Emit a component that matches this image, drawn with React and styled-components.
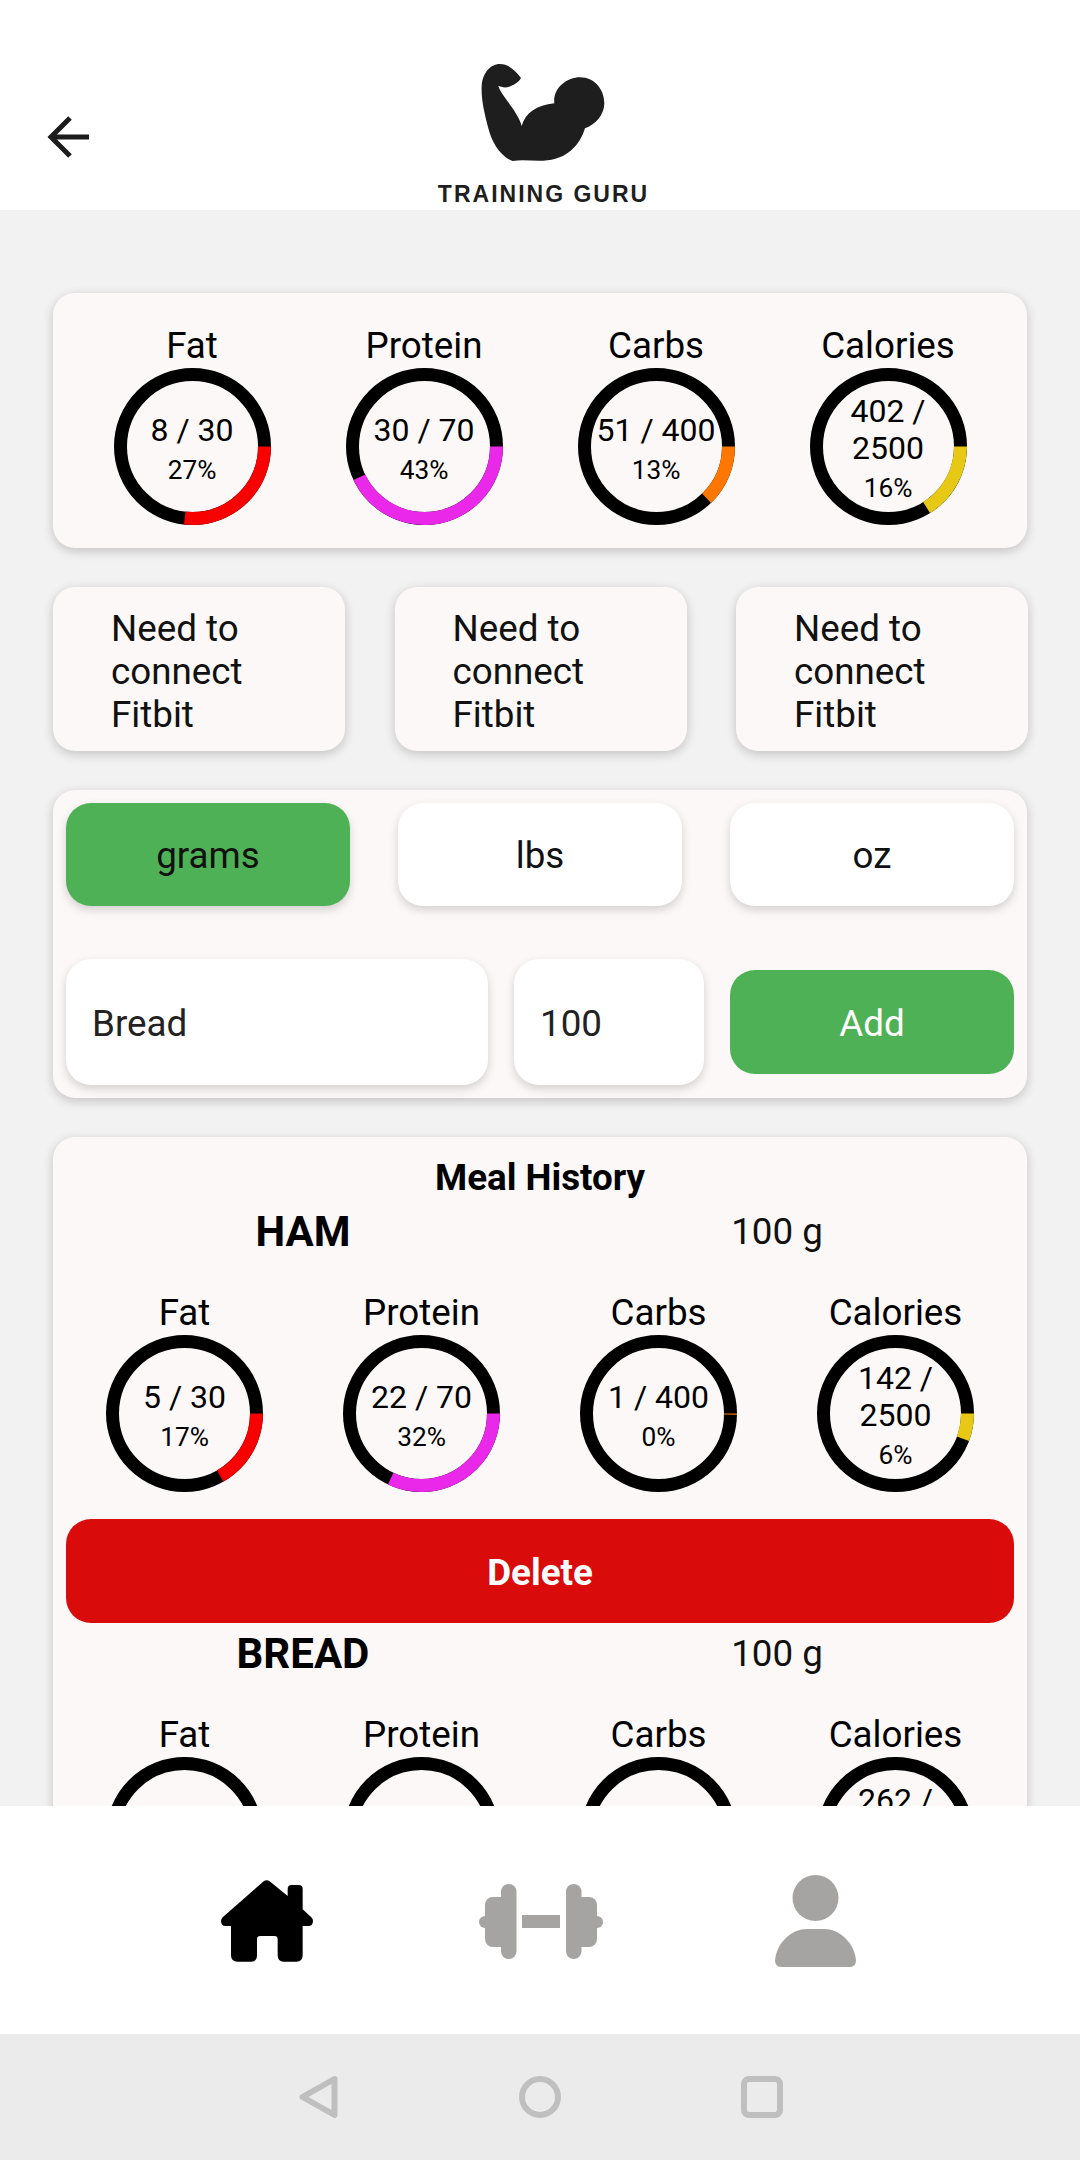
import React from 'react';
import styled, { createGlobalStyle } from 'styled-components';

const GlobalStyle = createGlobalStyle`
  html, body {
    margin: 0;
    padding: 0;
    background: #f2f2f2;
    font-family: Roboto, "Liberation Sans", sans-serif;
  }
  * {
    box-sizing: border-box;
  }
`;

const Screen = styled.div`
  width: 1080px;
  height: 2160px;
  display: flex;
  flex-direction: column;
  overflow: hidden;
`;

const Header = styled.header`
  height: 210px;
  flex: none;
  background: #ffffff;
  display: grid;
  grid-template-columns: 1fr auto 1fr;
  align-items: end;
`;

const BackSlot = styled.div`
  padding: 0 0 51px 46px;
  display: flex;
`;

const Logo = styled.div`
  width: 240px;
  display: flex;
  flex-direction: column;
  align-items: center;
`;

const LogoText = styled.span`
  font-family: "Liberation Sans", sans-serif;
  font-weight: 700;
  font-size: 23px;
  line-height: 22px;
  letter-spacing: 2px;
  color: #1e1e1e;
  white-space: nowrap;
  margin: -7.5px 0 5.5px 7px;
`;

const Main = styled.main`
  flex: 1;
  min-height: 0;
  overflow: hidden;
  padding: 83px 53px 0;
  display: flex;
  flex-direction: column;
  gap: 39px;
`;

const Card = styled.section`
  background: #fbf8f7;
  border-radius: 22px;
  box-shadow: 0 3px 11px rgba(0, 0, 0, 0.2);
`;

const SummaryCard = styled(Card)`
  flex: none;
  padding: 32px 23px 23px;
`;

const StatGrid = styled.div`
  display: grid;
  grid-template-columns: repeat(4, 1fr);
`;

const Stat = styled.div`
  display: flex;
  flex-direction: column;
  align-items: center;
  gap: 2px;
`;

const StatLabel = styled.div`
  font-size: 36.75px;
  line-height: 41px;
  color: #000;
`;

const RingBox = styled.div`
  width: 157px;
  height: 157px;
  display: grid;
  place-items: center;

  & > * {
    grid-area: 1 / 1;
  }
`;

const RingText = styled.div`
  width: 128px;
  padding-top: 3px;
  display: flex;
  flex-direction: column;
  align-items: center;
  text-align: center;
  color: #000;
`;

const RingValue = styled.div`
  font-size: 32px;
  line-height: 37px;
`;

const RingPct = styled.div`
  font-size: 26.25px;
  line-height: 30px;
  margin-top: 6px;
`;

const FitbitRow = styled.div`
  flex: none;
  margin-right: -1px;
  display: flex;
  justify-content: space-between;
`;

const FitbitCard = styled(Card)`
  width: 292px;
  height: 164px;
  padding: 20px 20px 0 58px;
  font-size: 36.75px;
  line-height: 43px;
  color: #111;
`;

const FormCard = styled(Card)`
  flex: none;
  padding: 13px;
  display: flex;
  flex-direction: column;
  gap: 53px;
`;

const UnitRow = styled.div`
  display: flex;
  justify-content: space-between;
`;

const UnitButton = styled.button`
  width: 284px;
  height: 103px;
  padding: 2px 0 0;
  border: none;
  border-radius: 25px;
  background: ${(p) => (p.$active ? '#4fb155' : '#ffffff')};
  box-shadow: 0 4px 10px rgba(0, 0, 0, 0.16);
  font-family: inherit;
  font-size: 36.75px;
  color: #111;
`;

const InputRow = styled.div`
  display: flex;
  align-items: center;
  gap: 26px;
`;

const TextField = styled.input`
  width: ${(p) => p.$width}px;
  height: 126px;
  border: none;
  outline: none;
  border-radius: 25px;
  background: #ffffff;
  box-shadow: 0 4px 10px rgba(0, 0, 0, 0.16);
  padding: 2px 0 0 26px;
  font-family: inherit;
  font-size: 36.75px;
  color: #222;
`;

const AddButton = styled.button`
  width: 284px;
  height: 104px;
  padding: 2px 0 0;
  border: none;
  border-radius: 25px;
  background: #4fb155;
  font-family: inherit;
  font-size: 36.75px;
  color: #ffffff;
`;

const HistoryCard = styled(Card)`
  flex: none;
  padding: 21px 13px 0;
`;

const HistoryTitle = styled.h2`
  margin: 0 0 9px;
  text-align: center;
  font-size: 36.75px;
  line-height: 40px;
  font-weight: 700;
  color: #000;
`;

const MealRow = styled.div`
  display: grid;
  grid-template-columns: 1fr 1fr;
  align-items: center;
  text-align: center;
  height: 48px;
  margin-bottom: 37px;
`;

const MealName = styled.div`
  font-size: 42px;
  font-weight: 700;
  color: #000;
`;

const MealAmount = styled.div`
  font-size: 36.75px;
  color: #111;
`;

const DeleteButton = styled.button`
  width: 100%;
  height: 104px;
  margin: 27px 0 6px;
  padding: 2px 0 0;
  border: none;
  border-radius: 25px;
  background: #d90b0b;
  font-family: inherit;
  font-size: 36.75px;
  font-weight: 700;
  color: #ffffff;
`;

const BottomNav = styled.nav`
  height: 228px;
  flex: none;
  padding: 2px 0 0 2px;
  background: #ffffff;
  display: flex;
  justify-content: center;
  align-items: center;
`;

const NavItem = styled.div`
  width: 274.5px;
  display: flex;
  justify-content: center;
  align-items: center;
  color: ${(p) => (p.$active ? '#000000' : '#a5a4a2')};
`;

const SystemBar = styled.div`
  height: 126px;
  flex: none;
  background: #ebebeb;
  display: flex;
  justify-content: center;
  align-items: center;
`;

const SystemItem = styled.div`
  width: 222px;
  display: flex;
  justify-content: center;
`;

const colors = { fat: '#f90000', protein: '#ea28ea', carbs: '#ff7700', calories: '#e6c815' };

function Ring({ label, color, value, goal, pct, fraction }) {
  const r = 72;
  const length = 2 * Math.PI * r;
  return (
    <Stat>
      <StatLabel>{label}</StatLabel>
      <RingBox>
        <svg width="157" height="157" viewBox="0 0 157 157">
          <circle cx="78.5" cy="78.5" r={r} fill="none" stroke="#000" strokeWidth="13" />
          <circle
            cx="78.5"
            cy="78.5"
            r={r}
            fill="none"
            stroke={color}
            strokeWidth="13"
            strokeDasharray={`${length * fraction} ${length}`}
          />
        </svg>
        <RingText>
          <RingValue>
            {value} / {goal}
          </RingValue>
          <RingPct>{pct}%</RingPct>
        </RingText>
      </RingBox>
    </Stat>
  );
}

function Stats({ fat, protein, carbs, calories }) {
  return (
    <StatGrid>
      <Ring label="Fat" color={colors.fat} goal={30} {...fat} />
      <Ring label="Protein" color={colors.protein} goal={70} {...protein} />
      <Ring label="Carbs" color={colors.carbs} goal={400} {...carbs} />
      <Ring label="Calories" color={colors.calories} goal={2500} {...calories} />
    </StatGrid>
  );
}

const totals = {
  fat: { value: 8, pct: 27, fraction: 0.267 },
  protein: { value: 30, pct: 43, fraction: 0.429 },
  carbs: { value: 51, pct: 13, fraction: 0.1275 },
  calories: { value: 402, pct: 16, fraction: 0.161 },
};

const meals = [
  {
    name: 'HAM',
    amount: '100 g',
    stats: {
      fat: { value: 5, pct: 17, fraction: 0.167 },
      protein: { value: 22, pct: 32, fraction: 0.32 },
      carbs: { value: 1, pct: 0, fraction: 0.0025 },
      calories: { value: 142, pct: 6, fraction: 0.057 },
    },
  },
  {
    name: 'BREAD',
    amount: '100 g',
    stats: {
      fat: { value: 3, pct: 10, fraction: 0.1 },
      protein: { value: 8, pct: 11, fraction: 0.114 },
      carbs: { value: 50, pct: 13, fraction: 0.125 },
      calories: { value: 262, pct: 10, fraction: 0.105 },
    },
  },
];

function BackArrow() {
  return (
    <svg width="44" height="44" viewBox="0 0 44 44" fill="none" stroke="#1c1c1c" strokeWidth="5">
      <path d="M6 22 H43" />
      <path d="M24 3 L5 22 L24 41" />
    </svg>
  );
}

function MuscleLogo() {
  return (
    <svg width="240" height="140" viewBox="0 0 720 420">
      <path
        fill="#1e1e1e"
        d="M240 42 C265 42 285 60 303 84 C295 100 265 115 250 112 L235 108 C245 140 295 185 305 228 C315 190 350 165 403 160 C398 115 440 82 480 82 C525 82 553 120 553 160 C553 195 525 225 495 235 C480 285 440 330 370 332 C340 334 310 328 278 333 C240 320 215 275 205 235 C195 195 183 150 185 110 C187 70 210 42 240 42 Z"
      />
    </svg>
  );
}

function HomeIcon() {
  return (
    <svg width="92" height="82" viewBox="0 0 276 246" fill="currentColor">
      <path d="M128 4 Q137 -3 146 4 L200 48 V27 Q200 15 212 15 H233 Q245 15 245 27 V88 L271 112 Q276 117 276 122 Q276 138 262 138 H245 V226 Q245 245 226 245 H188 Q170 245 170 226 V178 Q170 168 160 168 H118 Q108 168 108 178 V226 Q108 245 90 245 H50 Q30 245 30 226 V138 H14 Q0 138 0 122 Q0 117 5 112 Z" />
    </svg>
  );
}

function BarbellIcon() {
  return (
    <svg width="124" height="75" viewBox="0 0 124 75" fill="currentColor">
      <rect x="0" y="32" width="12" height="12" rx="6" />
      <rect x="6" y="13" width="24" height="50" rx="8" />
      <rect x="22" y="0" width="15.5" height="75" rx="7.5" />
      <rect x="43" y="31" width="38" height="13" />
      <rect x="87" y="0" width="15.5" height="75" rx="7.5" />
      <rect x="94" y="13" width="24" height="50" rx="8" />
      <rect x="112" y="32" width="12" height="12" rx="6" />
    </svg>
  );
}

function PersonIcon() {
  return (
    <svg width="81" height="92" viewBox="0 0 81 92" fill="currentColor">
      <circle cx="40.5" cy="23" r="23" />
      <path d="M0 85 C2 67 17 54 32 54 H49 C64 54 79 67 81 85 Q81 92 75 92 H6 Q0 92 0 85 Z" />
    </svg>
  );
}

export default function App() {
  return (
    <Screen>
      <GlobalStyle />
      <Header>
        <BackSlot>
          <BackArrow />
        </BackSlot>
        <Logo>
          <MuscleLogo />
          <LogoText>TRAINING GURU</LogoText>
        </Logo>
      </Header>

      <Main>
        <SummaryCard>
          <Stats {...totals} />
        </SummaryCard>

        <FitbitRow>
          <FitbitCard>Need to connect Fitbit</FitbitCard>
          <FitbitCard>Need to connect Fitbit</FitbitCard>
          <FitbitCard>Need to connect Fitbit</FitbitCard>
        </FitbitRow>

        <FormCard>
          <UnitRow>
            <UnitButton $active>grams</UnitButton>
            <UnitButton>lbs</UnitButton>
            <UnitButton>oz</UnitButton>
          </UnitRow>
          <InputRow>
            <TextField $width={422} defaultValue="Bread" />
            <TextField $width={190} defaultValue="100" />
            <AddButton>Add</AddButton>
          </InputRow>
        </FormCard>

        <HistoryCard>
          <HistoryTitle>Meal History</HistoryTitle>
          {meals.map((meal) => (
            <div key={meal.name}>
              <MealRow>
                <MealName>{meal.name}</MealName>
                <MealAmount>{meal.amount}</MealAmount>
              </MealRow>
              <Stats {...meal.stats} />
              <DeleteButton>Delete</DeleteButton>
            </div>
          ))}
        </HistoryCard>
      </Main>

      <BottomNav>
        <NavItem $active>
          <HomeIcon />
        </NavItem>
        <NavItem>
          <BarbellIcon />
        </NavItem>
        <NavItem>
          <PersonIcon />
        </NavItem>
      </BottomNav>

      <SystemBar>
        <SystemItem>
          <svg width="42" height="44" viewBox="0 0 42 44" fill="none" stroke="#bfbfbf" strokeWidth="6" strokeLinejoin="round">
            <path d="M37.5 4 L5.5 22 L37.5 40 Z" />
          </svg>
        </SystemItem>
        <SystemItem>
          <svg width="42" height="44" viewBox="0 0 42 44" fill="none" stroke="#bfbfbf" strokeWidth="6">
            <circle cx="21" cy="22" r="18" />
          </svg>
        </SystemItem>
        <SystemItem>
          <svg width="42" height="44" viewBox="0 0 42 44" fill="none" stroke="#bfbfbf" strokeWidth="6">
            <rect x="3" y="4" width="36" height="36" rx="5" />
          </svg>
        </SystemItem>
      </SystemBar>
    </Screen>
  );
}
